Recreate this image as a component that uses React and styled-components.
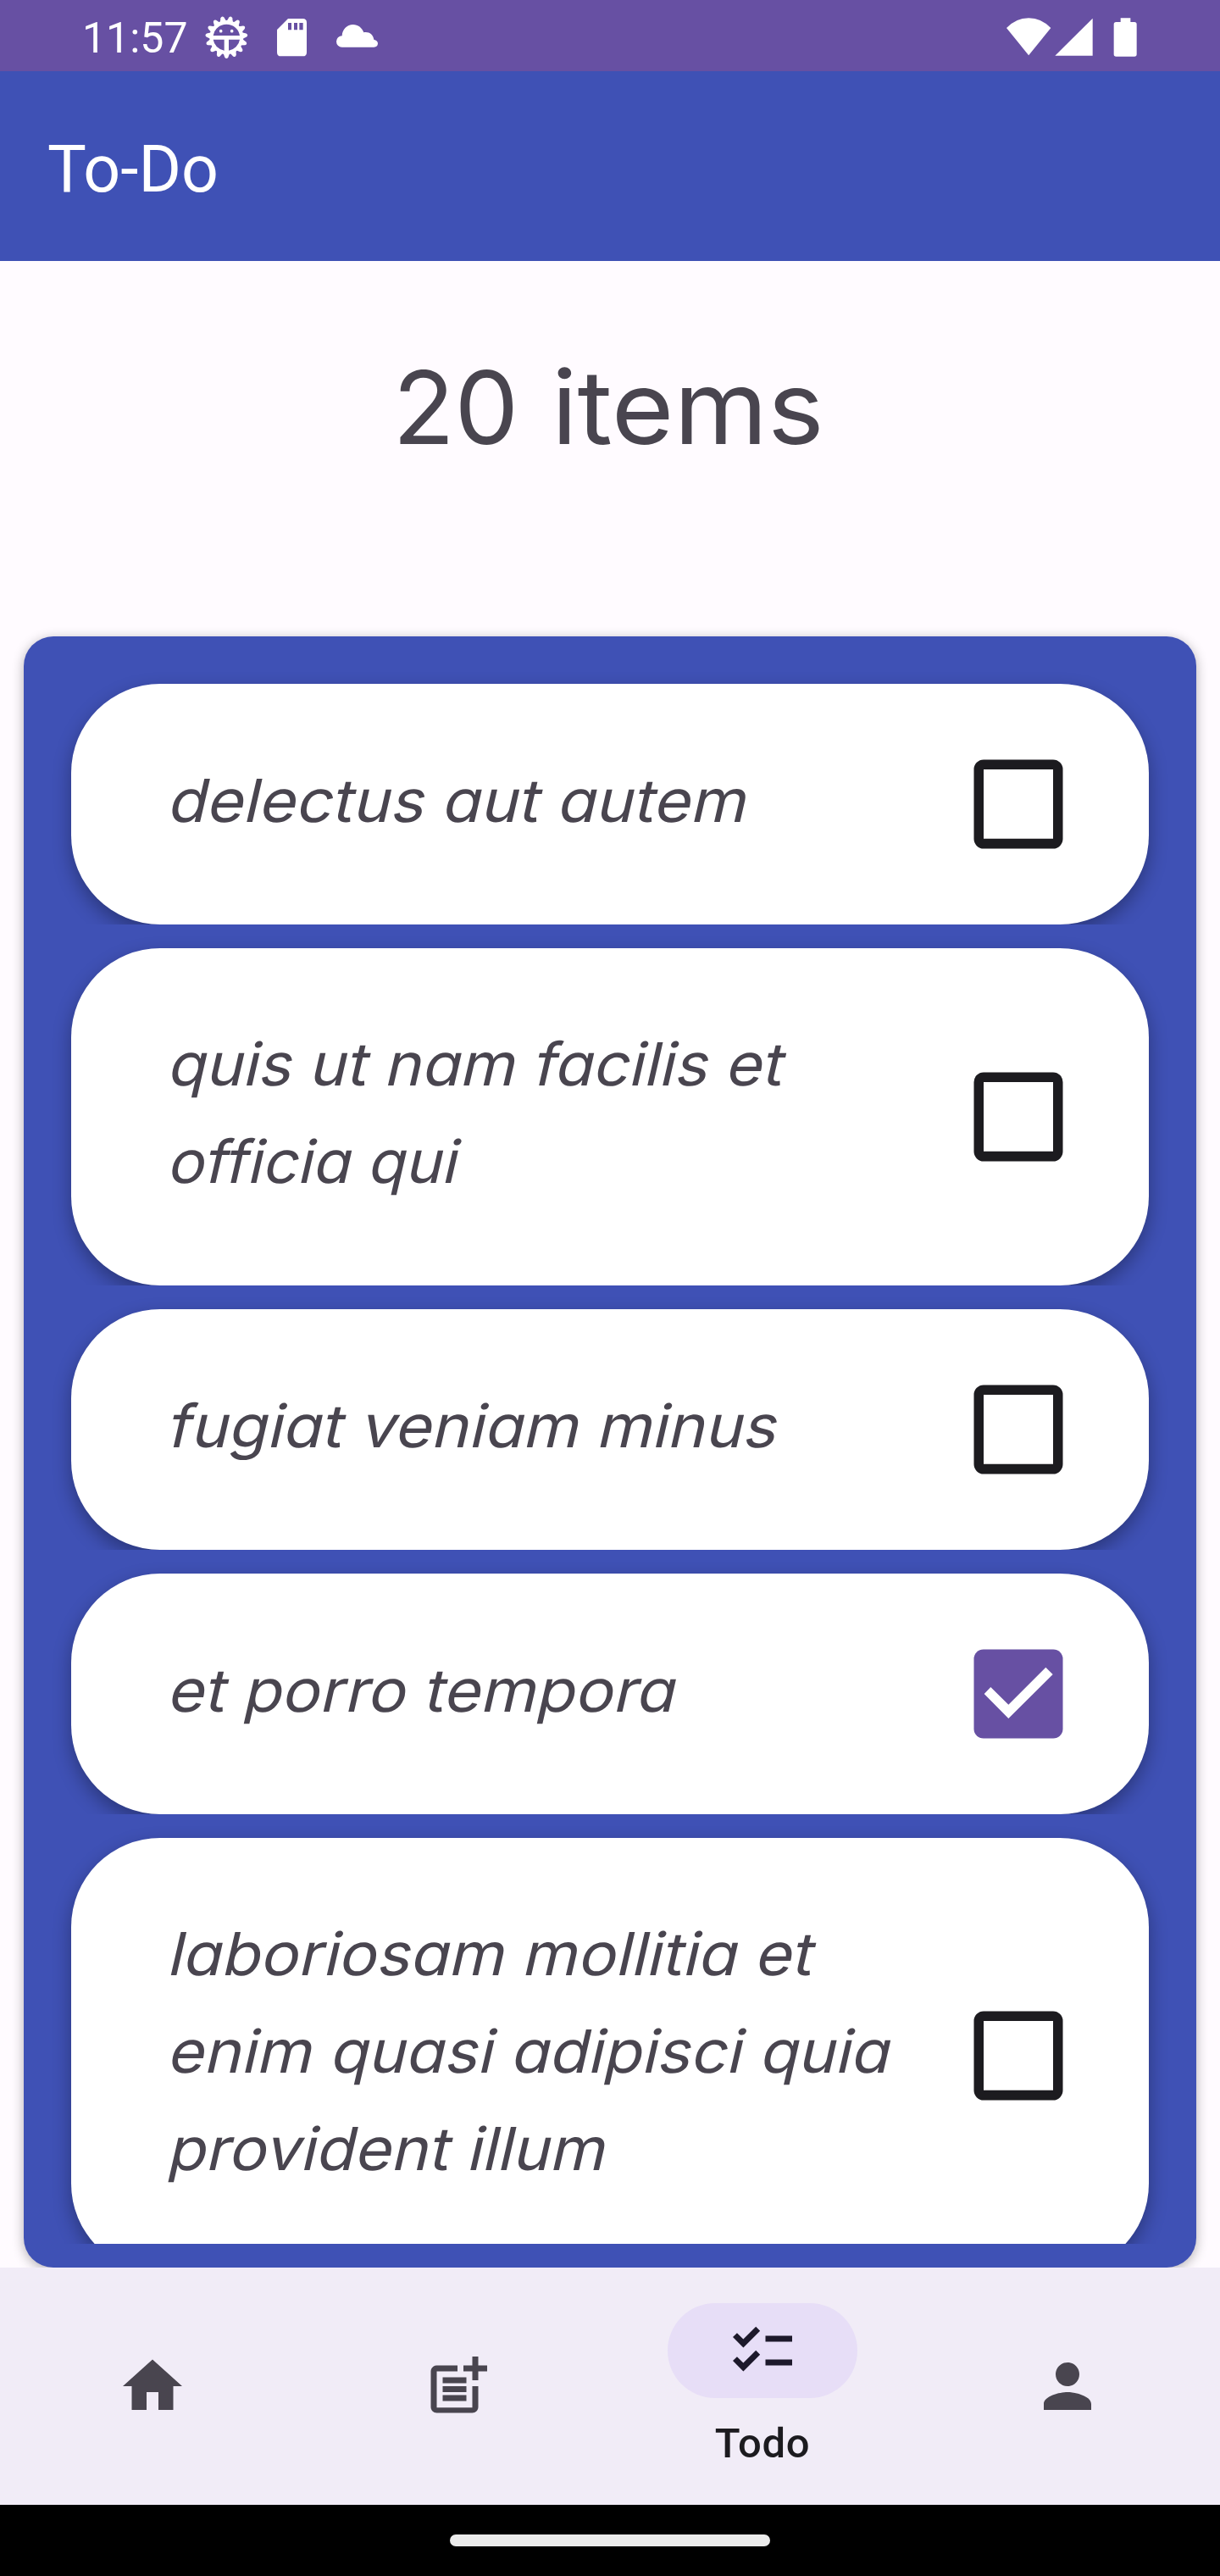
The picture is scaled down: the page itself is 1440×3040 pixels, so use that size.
import React, { useState } from "react";
import styled, { createGlobalStyle } from "styled-components";
import { MdHome, MdPostAdd, MdChecklist, MdPerson } from "react-icons/md";

const GlobalStyle = createGlobalStyle`
  * { box-sizing: border-box; }
  body { margin: 0; background: #fffbff; }
  button { border: 0; padding: 0; margin: 0; background: none; font: inherit; color: inherit; }
`;

const Screen = styled.div`
  width: 1440px;
  height: 3040px;
  display: flex;
  flex-direction: column;
  overflow: hidden;
  background: #fffbff;
  color: #49454f;
  font-family: Inter, "Liberation Sans", sans-serif;
`;

const StatusBar = styled.header`
  height: 84px;
  flex: none;
  display: flex;
  justify-content: space-between;
  padding: 0 96px 0 97px;
  background: #6750a3;
  color: #fff;
`;

const StatusGroup = styled.div`
  display: flex;
  gap: ${(p) => p.$gap}px;
`;

const Clock = styled.span`
  width: 112px;
  white-space: nowrap;
  font: 400 50px/90px Roboto, sans-serif;
`;

const StatusIcon = styled.svg`
  height: 84px;
  width: ${(p) => p.$w}px;
  display: block;
  fill: #fff;
`;

const AppBar = styled.div`
  height: 224px;
  flex: none;
  display: flex;
  align-items: center;
  padding: 7px 56px 0;
  background: #3f51b5;
  color: #fff;
  font: 400 77px/90px Roboto, sans-serif;
`;

const Content = styled.main`
  flex: 1;
  min-height: 0;
  display: flex;
  flex-direction: column;
  padding: 83px 28px 0;
`;

const Count = styled.h1`
  margin: 0 0 180px;
  height: 180px;
  padding-right: 20px;
  text-align: center;
  font-size: 120px;
  line-height: 180px;
  font-weight: 400;
  word-spacing: 5px;
`;

const CountUnit = styled.span`
  display: inline-block;
  transform: scaleX(1.053);
  transform-origin: 0 0;
`;

const Panel = styled.section`
  height: 1925px;
  flex: none;
  padding: 28px;
  border-radius: 35px;
  background: #3f51b5;
  box-shadow: 0 3px 14px rgba(0, 0, 0, 0.3);
`;

const List = styled.div`
  height: 100%;
  overflow: hidden;
`;

const Item = styled.div`
  padding: 28px 28px 0;
  overflow: hidden;
`;

const Card = styled.label`
  min-height: 284px;
  display: flex;
  align-items: center;
  justify-content: space-between;
  padding: 0 101px 0 112px;
  border-radius: 105px;
  background: #fff;
  box-shadow: 0 9px 22px rgba(0, 0, 0, 0.32);
`;

const CardText = styled.div`
  padding: 79px 0 89px;
  font-size: 70px;
  line-height: 115px;
  font-feature-settings: "cv11";
`;

const Line = styled.span`
  display: block;
  white-space: nowrap;
  transform: skewX(-13deg) scaleX(${(p) => p.$stretch});
  transform-origin: 0 83px;
`;

const CheckSvg = styled.svg`
  width: 106px;
  height: 106px;
  flex: none;
`;

const NavBar = styled.nav`
  height: 280px;
  flex: none;
  display: grid;
  grid-template-columns: repeat(4, 1fr);
  background: #f1ecf7;
  position: relative;
`;

const NavItem = styled.button`
  display: flex;
  flex-direction: column;
  align-items: center;
  justify-content: ${(p) => (p.$active ? "flex-start" : "center")};
  padding-top: ${(p) => (p.$active ? 42 : 0)}px;
  color: ${(p) => (p.$active ? "#1d192b" : "#49454f")};
`;

const NavIcon = styled.span`
  width: 224px;
  height: 112px;
  border-radius: 56px;
  display: flex;
  align-items: center;
  justify-content: center;
  font-size: 84px;
  background: ${(p) => (p.$active ? "#e7def7" : "transparent")};
`;

const NavLabel = styled.span`
  margin-top: 25px;
  color: #1c1b1f;
  font: 500 49px/57px Roboto, sans-serif;
  letter-spacing: 0.7px;
`;

const GestureBar = styled.footer`
  height: 84px;
  flex: none;
  display: flex;
  align-items: center;
  justify-content: center;
  background: #000;
`;

const Handle = styled.div`
  width: 378px;
  height: 14px;
  border-radius: 7px;
  background: #ebebeb;
`;

const TODOS = [
  { lines: [["delectus aut autem", 1.071]] },
  { lines: [["quis ut nam facilis et", 1.06], ["officia qui", 1.039]] },
  { lines: [["fugiat veniam minus", 1.07]] },
  { lines: [["et porro tempora", 1.07]], done: true },
  { lines: [["laboriosam mollitia et", 1.069], ["enim quasi adipisci quia", 1.064], ["provident illum", 1.063]] },
];

const TABS = [
  { icon: MdHome, label: "Home" },
  { icon: MdPostAdd, label: "Post" },
  { icon: MdChecklist, label: "Todo" },
  { icon: MdPerson, label: "Profile" },
];

function GearIcon() {
  const teeth = Array.from({ length: 15 }, (_, i) => 12 + i * 24);
  return (
    <StatusIcon $w={54} viewBox="720 0 162 252">
      <g transform="translate(802 132)">
        {teeth.map((a) => (
          <path key={a} transform={`rotate(${a})`} d="M-13-52L-6-71Q0-79 6-71L13-52Z" />
        ))}
        <path fillRule="evenodd" d="M0-60A60 60 0 1 1 0 60A60 60 0 1 1 0-60ZM0-46A47 47 0 0 0-47-6H47A47 47 0 0 0 0-46ZM-47 8A47 47 0 0 0-8 47V8ZM47 8A47 47 0 0 1 8 47V8Z" />
        <circle cx="-20" cy="-22" r="5.5" />
        <circle cx="19" cy="-22" r="5.5" />
      </g>
    </StatusIcon>
  );
}

function Checkbox({ checked }) {
  return (
    <CheckSvg viewBox="0 0 318 318">
      {checked ? (
        <>
          <rect x="1.5" y="1.5" width="315" height="315" rx="34" fill="#6750a3" />
          <path d="M38 159L61 135L124 197L256 65L281 90L124 246Z" fill="#fff" />
        </>
      ) : (
        <path
          fill="#1c1b1f"
          fillRule="evenodd"
          d="M36 1.5H282A34.5 34.5 0 0 1 316.5 36V282A34.5 34.5 0 0 1 282 316.5H36A34.5 34.5 0 0 1 1.5 282V36A34.5 34.5 0 0 1 36 1.5ZM36 36V281.5H282V36Z"
        />
      )}
    </CheckSvg>
  );
}

export default function App() {
  const [tab, setTab] = useState("Todo");
  return (
    <Screen>
      <GlobalStyle />
      <StatusBar>
        <StatusGroup $gap={31}>
          <Clock>11:57</Clock>
          <GearIcon />
          <StatusIcon $w={39} viewBox="975 0 117 252">
            <path fillRule="evenodd" d="M1020 66H1072Q1086 66 1086 80V185Q1086 199 1072 199H995Q981 199 981 185V105ZM1020 81V106H1032V81ZM1041 81V106H1053V81ZM1060 81V106H1073V81Z" />
          </StatusIcon>
          <StatusIcon $w={53} viewBox="1185 0 159 252">
            <path d="M1211 167A20 20 0 0 1 1211 127C1212 104 1229 87 1250 87C1268 87 1282 98 1288 115C1306 111 1321 122 1324 140C1333 142 1338 147 1338 154Q1337 167 1324 167Z" />
          </StatusIcon>
        </StatusGroup>
        <StatusGroup $gap={0}>
          <StatusIcon $w={56} viewBox="139 0 168 252">
            <path d="M145 99Q178 63.5 223.5 63.5Q269 63.5 302 99L223.5 196Z" />
          </StatusIcon>
          <StatusIcon $w={56} viewBox="307 0 168 252">
            <path d="M317 197L450 65V197Z" />
          </StatusIcon>
          <StatusIcon $w={46} viewBox="475 0 138 252">
            <path d="M549 63.5H584V78H598Q606 78 606 86V192Q606 200 598 200H533Q525 200 525 192V86Q525 78 533 78H549Z" />
          </StatusIcon>
        </StatusGroup>
      </StatusBar>
      <AppBar>To-Do</AppBar>
      <Content>
        <Count>20 <CountUnit>items</CountUnit></Count>
        <Panel>
          <List>
            {TODOS.map((todo) => (
              <Item key={todo.lines[0][0]}>
                <Card>
                  <CardText>
                    {todo.lines.map(([text, stretch]) => (
                      <Line key={text} $stretch={stretch}>{text}</Line>
                    ))}
                  </CardText>
                  <Checkbox checked={todo.done} />
                </Card>
              </Item>
            ))}
          </List>
        </Panel>
      </Content>
      <NavBar>
        {TABS.map(({ icon: Icon, label }) => {
          const active = label === tab;
          return (
            <NavItem key={label} $active={active} onClick={() => setTab(label)}>
              <NavIcon $active={active}><Icon /></NavIcon>
              {active && <NavLabel>{label}</NavLabel>}
            </NavItem>
          );
        })}
      </NavBar>
      <GestureBar><Handle /></GestureBar>
    </Screen>
  );
}
